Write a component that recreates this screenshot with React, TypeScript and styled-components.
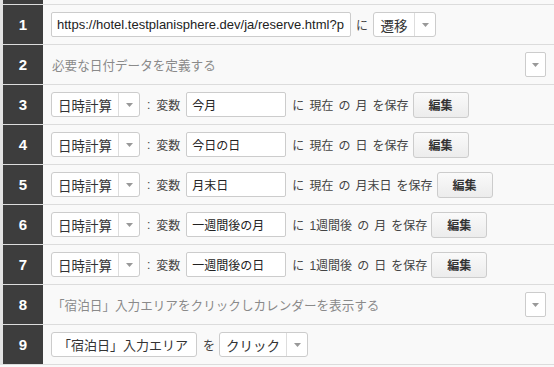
import React from "react";
import styled, { createGlobalStyle } from "styled-components";

const GlobalStyle = createGlobalStyle`
    html, body {
        margin: 0;
        padding: 0;
        background: #f9f9f9;
    }
    body {
        font-family: "Liberation Sans", "Noto Sans CJK JP", sans-serif;
        color: #333;
    }
`;

type Step =
    | { kind: "open"; url: string; action: string }
    | { kind: "comment"; text: string }
    | { kind: "date"; name: string; base: string; unit: string }
    | { kind: "click"; target: string; action: string };

const steps: Step[] = [
    { kind: "open", url: "https://hotel.testplanisphere.dev/ja/reserve.html?p", action: "遷移" },
    { kind: "comment", text: "必要な日付データを定義する" },
    { kind: "date", name: "今月", base: "現在", unit: "月" },
    { kind: "date", name: "今日の日", base: "現在", unit: "日" },
    { kind: "date", name: "月末日", base: "現在", unit: "月末日" },
    { kind: "date", name: "一週間後の月", base: "1週間後", unit: "月" },
    { kind: "date", name: "一週間後の日", base: "1週間後", unit: "日" },
    { kind: "comment", text: "「宿泊日」入力エリアをクリックしカレンダーを表示する" },
    { kind: "click", target: "「宿泊日」入力エリア", action: "クリック" },
];

const Arrow = () => (
    <svg width="7" height="4" viewBox="0 0 7 4">
        <path d="M0 0 L7 0 L3.5 4 Z" fill="#999" />
    </svg>
);

const Select: React.FC<{ label: string; width: number }> = ({ label, width }) => (
    <SelectBox style={{ width }}>
        <SelectLabel>{label}</SelectLabel>
        <SelectArrow>
            <Arrow />
        </SelectArrow>
    </SelectBox>
);

const StepBody: React.FC<{ step: Step }> = ({ step }) => {
    switch (step.kind) {
        case "open":
            return (
                <>
                    <TextInput width={300} size={13}>
                        {step.url}
                    </TextInput>
                    <Word left={5} right={5}>
                        に
                    </Word>
                    <Select label={step.action} width={63} />
                </>
            );
        case "comment":
            return (
                <>
                    <Comment>{step.text}</Comment>
                    <MenuButton>
                        <Arrow />
                    </MenuButton>
                </>
            );
        case "date":
            return (
                <>
                    <Select label="日時計算" width={89} />
                    <Word left={7} right={6}>
                        :
                    </Word>
                    <Word left={0} right={6}>
                        変数
                    </Word>
                    <TextInput width={100} size={12}>
                        {step.name}
                    </TextInput>
                    <Phrase>
                        に {step.base} の {step.unit} を保存
                    </Phrase>
                    <EditButton>編集</EditButton>
                </>
            );
        case "click":
            return (
                <>
                    <Target>{step.target}</Target>
                    <Word left={6} right={4}>
                        を
                    </Word>
                    <Select label={step.action} width={89} />
                </>
            );
    }
};

export default function App() {
    return (
        <>
            <GlobalStyle />
            <List>
                <Row partial>
                    <Num />
                    <Body />
                </Row>
                {steps.map((step, i) => (
                    <Row key={i}>
                        <Num>{i + 1}</Num>
                        <Body>
                            <StepBody step={step} />
                        </Body>
                    </Row>
                ))}
            </List>
        </>
    );
}

const List = styled.div`
    width: 554px;
    border-left: 3px solid #e2e2e2;
    box-sizing: border-box;
`;

const Row = styled.div<{ partial?: boolean }>`
    display: flex;
    height: ${p => (p.partial ? "5px" : "40px")};
    border-bottom: 1px solid #dcdcdc;
    box-sizing: border-box;
    background: #f9f9f9;
`;

const Num = styled.div`
    width: 40px;
    flex-shrink: 0;
    background: #3d3d3d;
    color: #fff;
    font-weight: bold;
    font-size: 15px;
    display: flex;
    align-items: center;
    justify-content: center;
`;

const Body = styled.div`
    flex: 1;
    display: flex;
    align-items: center;
    padding: 0 8px;
    min-width: 0;
    font-size: 12px;
`;

const TextInput = styled.div<{ width: number; size: number }>`
    width: ${p => p.width}px;
    height: 25px;
    box-sizing: border-box;
    border: 1px solid #ccc;
    border-radius: 2px;
    background: #fff;
    padding: 0 5px;
    display: flex;
    align-items: center;
    font-size: ${p => p.size}px;
    color: #222;
    white-space: nowrap;
    overflow: hidden;
`;

const Word = styled.span<{ left: number; right: number }>`
    margin: 0 ${p => p.right}px 0 ${p => p.left}px;
    font-size: 12px;
    color: #444;
`;

const Phrase = styled.span`
    margin: 0 4px 0 6px;
    font-size: 12px;
    color: #444;
    word-spacing: 1.7px;
    white-space: nowrap;
`;

const SelectBox = styled.div`
    height: 25px;
    box-sizing: border-box;
    border: 1px solid #ccc;
    border-radius: 3px;
    background: #fff;
    display: flex;
    align-items: stretch;
`;

const SelectLabel = styled.div`
    flex: 1;
    display: flex;
    align-items: center;
    justify-content: center;
    font-size: 13.5px;
    color: #333;
    white-space: nowrap;
`;

const SelectArrow = styled.div`
    width: 20px;
    border-left: 1px solid #ddd;
    display: flex;
    align-items: center;
    justify-content: center;
`;

const Comment = styled.span`
    flex: 1;
    font-size: 12.6px;
    color: #8a8a8a;
    padding-left: 1px;
`;

const MenuButton = styled.div`
    width: 21px;
    height: 25px;
    box-sizing: border-box;
    border: 1px solid #ccc;
    border-radius: 2px;
    background: #fff;
    display: flex;
    align-items: center;
    justify-content: center;
`;

const EditButton = styled.div`
    width: 56px;
    height: 26px;
    box-sizing: border-box;
    border: 1px solid #ccc;
    border-radius: 3px;
    background: linear-gradient(#fafafa, #ececec);
    font-size: 12px;
    font-weight: bold;
    color: #333;
    display: flex;
    align-items: center;
    justify-content: center;
`;

const Target = styled.div`
    height: 25px;
    box-sizing: border-box;
    border: 1px solid #ccc;
    border-radius: 3px;
    background: #fff;
    padding: 0 8px 0 6px;
    display: flex;
    align-items: center;
    font-size: 13px;
    color: #333;
    white-space: nowrap;
`;
